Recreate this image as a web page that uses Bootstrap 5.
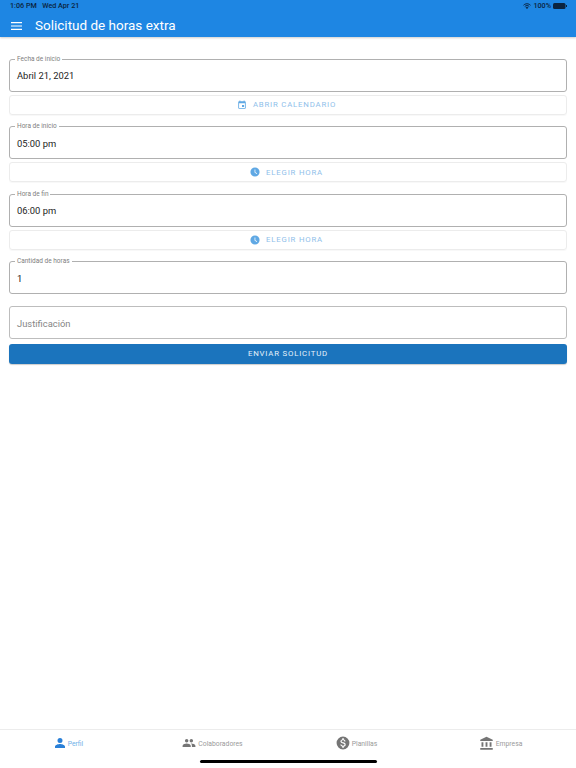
<!DOCTYPE html>
<html lang="es">
<head>
    <meta charset="UTF-8" />
    <meta name="viewport" content="width=device-width, initial-scale=1" />
    <title>Solicitud de horas extra</title>
    <link href="https://cdn.jsdelivr.net/npm/bootstrap@5.3.0/dist/css/bootstrap.min.css" rel="stylesheet" />
    <style>
        body {
            font-family: Roboto, "Liberation Sans", sans-serif;
            height: 768px;
            overflow: hidden;
            background: #fff;
        }
        .app-header { height: 37px; background: #1e86e3; box-shadow: 0 1px 2px rgba(0,0,0,.2); }
        .status-row { height: 13px; padding: 0 9px 0 10px; font-size: 7.2px; font-weight: 500; color: #0b2440; }
        .title-row { height: 24px; padding-left: 11px; padding-top: 1px; color: #fff; }
        .title-row h1 { font-size: 13.5px; font-weight: 400; margin: 0 0 0 13px; }
        .form-area { padding: 22px 9px 0; }
        .out-field { height: 33px; border: 1px solid #b0b0b0; border-radius: 3px; padding: 2px 7px 0; font-size: 9.4px; color: #1c1c1c; }
        .out-label { position: absolute; top: -4px; left: 5px; padding: 0 2px; background: #fff; font-size: 6.5px; line-height: 7px; color: #808080; }
        .muted-text { color: #858585; border-color: #bdbdbd; }
        .pick-btn { height: 20px; padding-right: 3px; border: 1px solid #ececec; border-radius: 3px; color: #8fc0ea; font-size: 7.8px; font-weight: 400; letter-spacing: .8px; box-shadow: 0 1px 1px rgba(0,0,0,.03); }
        .send-btn { height: 20px; background: #1b74bd; border-radius: 3px; color: #e6f2fb; font-size: 7.8px; font-weight: 400; letter-spacing: .8px; box-shadow: 0 1px 1px rgba(0,0,0,.2); }
        .tab-bar { position: absolute; left: 0; right: 0; top: 729px; height: 39px; border-top: 1px solid #ececec; font-size: 6.8px; color: #9a9a9a; }
        .tab-item { height: 26px; gap: 2px; padding-right: 7px; }
        .tab-item span { padding-top: 2px; }
        .tab-on { color: #6fb0e8; }
        .home-bar { position: absolute; left: 200px; top: 760px; width: 177px; height: 3px; border-radius: 2px; background: #000; }
        .pick-gap { gap: 6px; }
        .status-gap { gap: 2px; }
        .gap-a { margin-top: 3px; }
        .gap-b { margin-top: 11.4px; }
        .gap-c { margin-top: 12px; }
        .gap-d { margin-top: 5px; }
    </style>
</head>
<body class="position-relative">
<header class="app-header">
    <div class="status-row d-flex justify-content-between align-items-center">
        <span>1:06 PM &nbsp; Wed Apr 21</span>
        <span class="d-flex align-items-center status-gap">
            <svg width="8" height="6" viewBox="0 0 16 12" fill="none" stroke="#0b2440" stroke-width="2"><path d="M1 4.500C5 .5 11 .5 15 4.500M3.500 7C6 4.600 10 4.600 12.500 7"/><path fill="#0b2440" stroke="none" d="M8 12 5 9c1.700-1.400 4.300-1.400 6 0z"/></svg>
            <span>100%</span>
            <svg width="14" height="6" viewBox="0 0 14 6"><rect width="12.500" height="6" rx="1.500" fill="#0b2440"/><rect x="13" y="2" width="1" height="2" fill="#0b2440"/></svg>
        </span>
    </div>
    <div class="title-row d-flex align-items-center">
        <svg width="11" height="8" viewBox="0 0 11 8"><path fill="#fff" d="M0 0h11v1.200H0zM0 3.400h11v1.200H0zM0 6.800h11V8H0z"/></svg>
        <h1>Solicitud de horas extra</h1>
    </div>
</header>

<main class="form-area">
    <div class="out-field position-relative d-flex align-items-center"><span class="out-label">Fecha de inicio</span>Abril 21, 2021</div>
    <div class="pick-btn gap-a d-flex justify-content-center align-items-center pick-gap">
        <svg width="10" height="10" viewBox="0 0 24 24"><path fill="#5fa8e4" d="M17 12h-5v5h5v-5zM16 1v2H8V1H6v2H5C3.900 3 3 3.900 3 5v14c0 1.100.9 2 2 2h14c1.100 0 2-.9 2-2V5c0-1.100-.9-2-2-2h-1V1h-2zm3 18H5V8h14v11z"/></svg>
        <span>ABRIR CALENDARIO</span>
    </div>

    <div class="out-field gap-b position-relative d-flex align-items-center"><span class="out-label">Hora de inicio</span>05:00 pm</div>
    <div class="pick-btn gap-a d-flex justify-content-center align-items-center pick-gap">
        <svg width="10" height="10" viewBox="0 0 24 24"><path fill="#5fa8e4" d="M12 1a11 11 0 1 0 0 22 11 11 0 0 0 0-22zm4.200 15.500L11 13.300V6h1.800v6.300l4.400 2.700z"/></svg>
        <span>ELEGIR HORA</span>
    </div>

    <div class="out-field gap-b position-relative d-flex align-items-center"><span class="out-label">Hora de fin</span>06:00 pm</div>
    <div class="pick-btn gap-a d-flex justify-content-center align-items-center pick-gap">
        <svg width="10" height="10" viewBox="0 0 24 24"><path fill="#5fa8e4" d="M12 1a11 11 0 1 0 0 22 11 11 0 0 0 0-22zm4.200 15.500L11 13.300V6h1.800v6.300l4.400 2.700z"/></svg>
        <span>ELEGIR HORA</span>
    </div>

    <div class="out-field gap-b position-relative d-flex align-items-center"><span class="out-label">Cantidad de horas</span>1</div>
    <div class="out-field gap-c d-flex align-items-center muted-text">Justificación</div>
    <div class="send-btn gap-d d-flex justify-content-center align-items-center">ENVIAR SOLICITUD</div>
</main>

<nav class="tab-bar row g-0">
    <div class="col-3 tab-item tab-on d-flex justify-content-center align-items-center">
        <svg width="12" height="12" viewBox="0 0 24 24"><path fill="#2a80d8" d="M12 12a5 5 0 1 0 0-10 5 5 0 0 0 0 10zm0 2c-3.300 0-10 1.700-10 5v3h20v-3c0-3.300-6.700-5-10-5z"/></svg>
        <span>Perfil</span>
    </div>
    <div class="col-3 tab-item d-flex justify-content-center align-items-center">
        <svg width="14" height="14" viewBox="0 0 24 24"><path fill="#757575" d="M16 11a3 3 0 1 0 0-6 3 3 0 0 0 0 6zm-8 0a3 3 0 1 0 0-6 3 3 0 0 0 0 6zm0 2c-2.300 0-7 1.200-7 3.500V19h14v-2.500C15 14.200 10.300 13 8 13zm8 0h-1c1.200.8 2 2 2 3.500V19h6v-2.500c0-2.300-4.700-3.500-7-3.500z"/></svg>
        <span>Colaboradores</span>
    </div>
    <div class="col-3 tab-item d-flex justify-content-center align-items-center">
        <svg width="14" height="14" viewBox="0 0 24 24"><path fill="#757575" d="M12 1a11 11 0 1 0 0 22 11 11 0 0 0 0-22zm1.400 17.100V20h-2.700v-1.900c-1.700-.4-3.200-1.500-3.300-3.500h2c.1 1.100.8 1.900 2.700 1.900 2 0 2.500-1 2.500-1.600 0-.9-.5-1.700-2.800-2.200-2.500-.6-4.200-1.600-4.200-3.700 0-1.700 1.400-2.900 3.100-3.200V4h2.700v1.900c1.900.5 2.800 1.900 2.900 3.400h-2c-.1-1.100-.7-1.900-2.300-1.900-1.500 0-2.400.7-2.400 1.600 0 .8.700 1.400 2.800 1.900s4.200 1.400 4.200 3.900c0 1.800-1.300 2.800-3.200 3.300z"/></svg>
        <span>Planillas</span>
    </div>
    <div class="col-3 tab-item d-flex justify-content-center align-items-center">
        <svg width="15" height="15" viewBox="0 0 24 24"><path fill="#757575" d="M4 10v7h3v-7H4zm6.500 0v7h3v-7h-3zM2 22h20v-3H2v3zm15-12v7h3v-7h-3zM12 1 2 6v2h20V6L12 1z"/></svg>
        <span>Empresa</span>
    </div>
</nav>
<div class="home-bar"></div>

<script src="https://cdn.jsdelivr.net/npm/bootstrap@5.3.0/dist/js/bootstrap.bundle.min.js"></script>
</body>
</html>
